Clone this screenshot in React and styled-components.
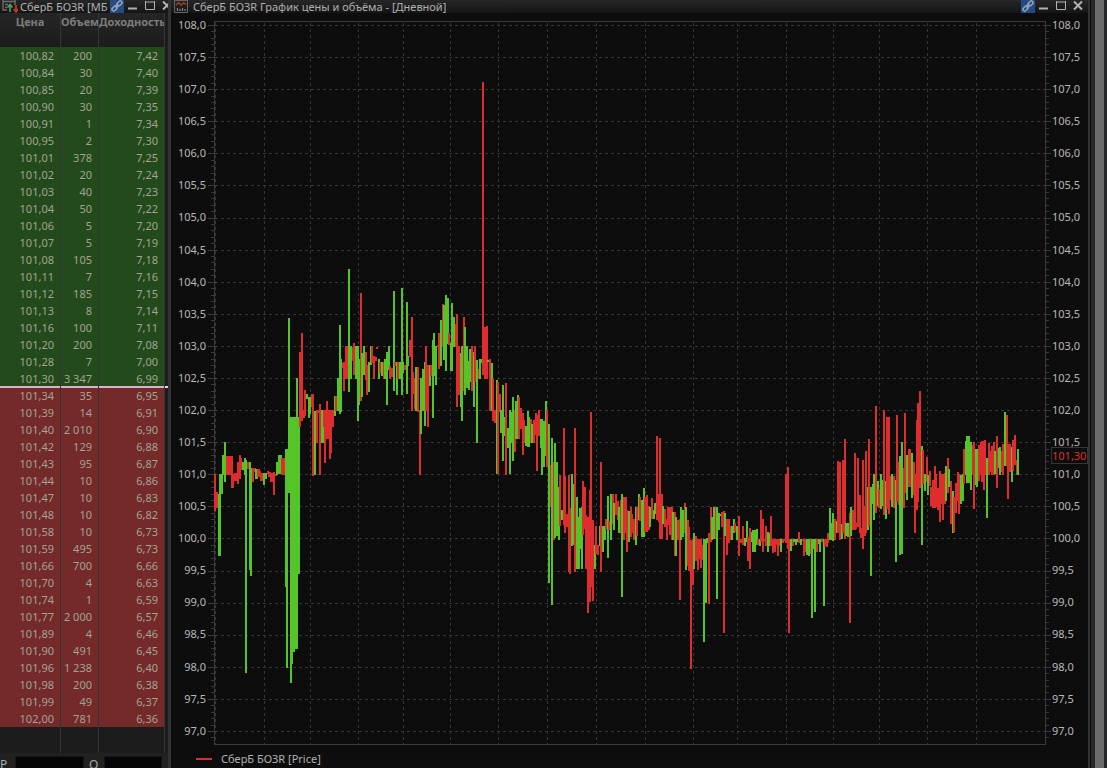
import React from 'react'
import styled, { createGlobalStyle } from "styled-components";

const asks = [
  ['100,82', '200', '7,42'], ['100,84', '30', '7,40'], ['100,85', '20', '7,39'], ['100,90', '30', '7,35'],
  ['100,91', '1', '7,34'], ['100,95', '2', '7,30'], ['101,01', '378', '7,25'], ['101,02', '20', '7,24'],
  ['101,03', '40', '7,23'], ['101,04', '50', '7,22'], ['101,06', '5', '7,20'], ['101,07', '5', '7,19'],
  ['101,08', '105', '7,18'], ['101,11', '7', '7,16'], ['101,12', '185', '7,15'], ['101,13', '8', '7,14'],
  ['101,16', '100', '7,11'], ['101,20', '200', '7,08'], ['101,28', '7', '7,00'], ['101,30', '3 347', '6,99'],
]

const bids = [
  ['101,34', '35', '6,95'], ['101,39', '14', '6,91'], ['101,40', '2 010', '6,90'], ['101,42', '129', '6,88'],
  ['101,43', '95', '6,87'], ['101,44', '10', '6,86'], ['101,47', '10', '6,83'], ['101,48', '10', '6,82'],
  ['101,58', '10', '6,73'], ['101,59', '495', '6,73'], ['101,66', '700', '6,66'], ['101,70', '4', '6,63'],
  ['101,74', '1', '6,59'], ['101,77', '2 000', '6,57'], ['101,89', '4', '6,46'], ['101,90', '491', '6,45'],
  ['101,96', '1 238', '6,40'], ['101,98', '200', '6,38'], ['101,99', '49', '6,37'], ['102,00', '781', '6,36'],
]

// colour, x, top, bottom and, when wider than 2, the width
const bars = `
r 214 474 511,r 216 492 508,g 218 494 556 3,g 219 474 494 4,g 222 455 475 4,g 224 442 482,r 226 456 475 7,r 231 474 488 3,
r 234 473 481 4,r 237 462 484,r 239 455 479,r 240 458 470,g 242 462 470 3,g 244 458 475,g 245 460 673,r 247 462 469 3,
g 249 462 570,g 250 468 576,r 252 468 482,r 254 468 472,g 255 469 479 3,r 257 469 477 3,r 258 471 477 3,r 260 473 481 3,
g 263 473 485,g 265 473 479,r 267 471 474,r 268 472 477 3,r 270 473 482 4,r 273 472 495,r 275 474 476,g 276 462 475,
g 278 455 474 4,r 281 458 475 4,g 285 449 587,g 286 449 668,g 288 318 493,g 288 417 493 12,g 290 417 683,g 291 417 664,
g 293 417 652,g 294 417 649 4,g 298 417 574,g 296 378 420,r 299 352 427,r 301 333 421,r 303 410 418,r 304 390 416,
g 306 394 399,g 308 397 418,g 309 397 414,r 311 394 407 3,r 312 394 476,g 314 411 475,r 316 410 443,r 318 410 413,
r 319 404 475,g 321 410 443 3,r 323 410 427,r 324 410 463,r 326 401 439,r 328 410 439,r 329 410 459,r 330 410 453,
r 332 410 427,g 334 396 416,r 335 396 411,g 337 378 411,g 339 325 414,g 340 359 412,r 342 363 368 3,r 343 362 391,
r 345 346 379 3,g 348 269 392,g 350 346 379,r 352 347 361,r 353 343 375,g 355 346 379 3,g 357 346 421,g 358 359 405,
r 360 293 401,g 361 353 397,g 363 346 375,r 365 352 380,r 366 365 395,g 368 362 392,g 370 346 365,r 371 346 363,
r 373 356 379,r 375 357 361,r 376 347 349,g 378 359 379,r 379 362 373,g 381 362 376,r 383 362 379,g 384 359 379,
g 386 352 405,g 388 346 370,r 389 366 379,r 391 368 377,g 393 291 391,r 394 362 366,g 396 362 395,r 397 362 379 3,
g 399 362 379,g 401 288 395,g 402 362 373,r 404 365 370,g 406 302 394,g 407 356 366,r 409 340 357,r 411 317 411,
r 412 372 394,r 414 378 409,g 415 367 411,r 417 367 412,r 419 410 475,g 420 378 434,g 422 369 411,g 424 362 426,
r 425 346 411,r 427 365 427,g 429 365 386,r 430 365 376,g 432 340 418,g 433 333 376,g 435 346 385,r 437 345 347,
r 438 333 369,g 440 320 366,r 442 304 347,g 443 305 360,g 445 295 371,g 447 298 344,r 448 333 345,g 450 343 371,
g 451 303 371,g 453 317 347,r 455 324 347,r 456 314 407,r 458 346 395,g 460 353 407,g 461 346 421,r 463 317 391,
g 464 327 395,g 466 346 388,g 468 361 390,g 469 349 382,r 471 346 391,g 473 352 407,r 474 346 382,g 476 360 443,
r 478 369 379,g 479 359 379,g 481 359 363,r 482 82 375,r 484 327 379,r 486 326 379,g 487 360 362,r 489 359 411,
g 491 363 411,r 492 379 421,r 494 410 423,g 496 380 474,r 497 382 474,r 499 394 412,g 500 410 433,g 502 385 461,
g 504 417 436,r 505 383 475,g 507 428 448,g 509 410 474,g 511 412 443,g 512 397 461,r 514 410 452,g 515 401 439,
g 517 395 439,r 518 397 439,r 520 408 429,r 522 413 455,r 523 420 443,g 525 426 446,g 527 411 447,g 528 417 447,
r 530 419 443,g 531 424 443,r 533 420 443,r 535 413 435,r 536 415 471,r 538 410 436,g 540 419 448,g 541 419 475,
g 543 421 467,g 545 401 456,r 546 410 467,g 548 424 583,r 550 465 507,g 551 438 605,r 553 462 540,g 554 443 538,
g 556 462 536,g 558 487 540,r 559 475 526,g 561 510 520,r 563 428 525,r 564 476 533,r 566 514 527,r 568 475 572,
r 569 508 574,g 571 474 546,g 573 484 545,r 574 428 572,g 576 497 569,g 578 517 569,g 579 508 549,g 581 507 569,
r 582 481 535,r 584 487 529,r 585 515 569,r 587 517 613,r 589 490 602,r 590 412 587,r 592 520 601,g 594 545 569,
r 595 526 554,r 597 545 555,g 599 526 546,r 600 462 572,g 602 526 552,g 604 526 540,r 605 519 529,g 607 496 558,
r 608 521 530,g 610 494 540,r 612 494 524,g 613 503 530,r 615 494 515,r 617 501 520,g 618 507 533,r 620 500 533,
g 621 494 597,r 623 497 540,r 625 497 533,r 626 510 552,g 628 511 542,r 630 507 537,r 631 514 533,r 633 519 540,
g 635 507 545,r 636 507 536,g 638 494 520,r 639 497 521,g 641 500 537,g 643 488 537,r 644 497 532,r 646 495 532,
r 648 506 530,g 649 507 527,r 651 498 519,g 653 510 519,g 654 503 514,r 656 436 520,r 658 494 522,r 659 438 539,
r 661 494 539,g 662 506 524,r 664 509 527,r 666 519 540,r 667 507 525,r 669 507 535,r 671 507 540,g 672 512 540,
r 674 512 556,g 675 517 556,r 677 520 540,r 679 519 600,g 680 507 540,g 682 510 537,r 684 503 533,g 685 507 570,
r 687 520 566,r 688 527 571,r 690 540 669,r 692 539 585,g 693 533 569,r 695 536 561,r 697 539 570,r 699 539 559,
r 700 539 568,r 702 545 560,g 703 539 642,g 705 539 603,g 706 538 543,r 708 533 604,r 710 507 542,g 711 517 540,
g 713 507 539,r 715 507 539,g 716 507 599,g 718 513 530,g 719 514 516,r 721 512 527,r 723 511 633,g 724 513 536,
r 726 519 555,r 728 519 543,r 729 526 540,g 731 526 540,g 733 519 533,r 734 523 532,g 736 526 540,r 738 516 556,
r 740 539 543,r 742 526 545,g 744 538 546,g 746 521 542,r 747 537 561,r 749 528 569,g 751 532 542,g 752 530 552 4,
g 756 529 545,r 757 539 545,g 759 539 546,r 760 510 542,r 762 519 552,r 764 539 541,r 765 526 546,g 767 532 552,
g 768 533 546,r 770 516 546,r 772 539 553,r 774 539 552,r 776 539 545,r 777 539 556,r 779 539 546,g 780 539 552,
r 782 539 543,r 784 539 541,r 785 474 543,r 787 467 549,r 788 539 633,g 790 539 551,r 792 539 546,g 793 539 542,
g 795 539 545,g 796 539 542,r 798 532 543,g 800 539 545,r 802 539 541,r 803 539 556,r 805 539 552,g 806 539 555,
g 808 539 556,r 810 539 554,g 811 539 618,g 813 539 549,g 814 539 612,r 816 539 552,g 818 539 544,g 819 539 552,
r 821 539 542,g 823 539 606,r 824 539 546,r 826 539 547,r 827 533 543,g 829 508 540,g 831 523 540,g 832 513 541,
r 834 519 540,g 836 521 533,r 837 461 533,r 839 462 540,g 841 524 539,r 842 460 533,r 844 439 539,g 845 523 536,
g 847 523 537,r 849 513 623,g 850 507 536,r 852 510 530,r 854 453 530,r 855 523 529,r 857 458 527,r 859 495 533,
r 860 528 538,r 862 460 549,r 864 506 536,r 865 451 533,g 867 487 530,r 868 439 526,g 870 487 576,g 872 484 504,
g 873 474 520,r 875 406 513,g 877 481 506,r 878 489 508,g 880 474 509,g 882 480 506,r 883 410 515,g 885 481 519,
r 886 417 509 4,r 888 417 514,r 890 476 500,g 891 474 507,r 893 476 508,g 895 480 562,r 896 415 502,r 898 462 505,
g 899 456 555,g 901 442 554,r 903 468 508,r 904 413 493,g 906 455 500,r 908 449 487 3,g 911 453 498,r 913 462 495,
r 914 474 533,r 916 420 510,r 917 403 502,r 919 391 488,g 921 446 545,r 922 450 484,g 924 474 491,r 926 457 482,
g 927 475 495,r 929 471 486,r 930 487 506 4,r 932 480 508,r 934 466 508,r 935 474 507,r 937 488 510,r 939 471 522,
r 941 474 504,r 942 474 520,r 944 473 504,g 945 466 501,r 947 458 493,g 948 469 487,r 950 481 524,g 952 491 533,
r 953 497 532,r 955 483 513,r 957 472 501,r 958 474 514,g 960 475 504,g 962 474 501,r 963 449 484,g 965 441 475,
g 966 436 483 4,g 970 442 490,r 972 445 475,r 973 442 509,g 975 449 485,g 976 449 487,r 978 445 481,r 980 442 475,
r 981 441 482,r 983 441 490,r 984 440 475,g 986 458 518,r 988 443 475,r 990 451 472,r 991 446 475,r 993 442 475,
g 994 451 474,r 996 436 488,g 998 448 468,g 999 447 475,r 1001 451 472,r 1002 444 475,g 1004 412 466,r 1006 415 466,
r 1007 444 499,r 1009 444 472,g 1011 447 482,r 1012 440 471,r 1014 435 465,r 1016 460 475,g 1017 449 475
`.trim().split(',').map((bar) => bar.trim().split(' '))

const months = [215, 264, 310, 358, 403, 450, 498, 547, 596, 645, 693, 737, 786, 833, 879, 927, 976]
const levels = Array.from({ length: 23 }, (_, i) => (108 - i / 2).toFixed(1).replace('.', ','))
const levelY = (i) => Math.round(25 + i * 32.09)

function LinkIcon() {
  return (
    <svg width="12" height="12" viewBox="0 0 12 12" fill="none" stroke="#9cabc0" strokeWidth="1.4">
      <rect x="-2.8" y="-1.7" width="5.6" height="3.4" rx="1.5" transform="translate(3.5 8.5) rotate(-45)" />
      <rect x="-2.8" y="-1.7" width="5.6" height="3.4" rx="1.5" transform="translate(8.5 3.5) rotate(-45)" />
      <path d="M4.5 7.5l3-3" />
    </svg>
  )
}

function BookIcon() {
  return (
    <svg width="16" height="13" viewBox="0 0 16 13" fill="none">
      <path d="M1 0V10H5M1 1.5H13M13 0V5M3 4.5H6M3 7.5H5" stroke="#6c6c6c" strokeWidth="1.4" />
      <path d="M8 12V5M5.5 7.5L8 4.5L10.5 7.5" stroke="#4e9b60" strokeWidth="1.7" />
      <path d="M14 5V11M11.8 9L14 12L16 9" stroke="#c23a24" strokeWidth="1.7" />
    </svg>
  )
}

function ChartIcon() {
  return (
    <svg width="14" height="13" viewBox="0 0 14 13" fill="none">
      <path d="M.5 0V12.5H13.5V0M.5 .5H13.5" stroke="#666" />
      <path d="M2 5L4.5 2.8L7 5L9.5 2.8L12 4.5" stroke="#a93d25" strokeWidth="1.4" />
      <path d="M3.5 11V8M6 11V9M8.5 11V8M11 11V9" stroke="#777" strokeWidth="1.4" />
    </svg>
  )
}

function WindowButtons() {
  return (
    <Buttons>
      <LinkButton aria-label="Связать окна"><LinkIcon /></LinkButton>
      <WindowButton aria-label="Свернуть">
        <svg width="10" height="12" viewBox="0 0 10 12"><path d="M0 8.5H9" stroke="#b2b2b2" strokeWidth="2" /></svg>
      </WindowButton>
      <WindowButton aria-label="Развернуть">
        <svg width="10" height="12" viewBox="0 0 10 12"><path d="M.5 2H9.5M.5 1V9.5H9.5V1" fill="none" stroke="#b2b2b2" /></svg>
      </WindowButton>
      <WindowButton aria-label="Закрыть">
        <svg width="10" height="12" viewBox="0 0 10 12"><path d="M1 1.5L9 9.5M9 1.5L1 9.5" stroke="#b2b2b2" strokeWidth="2" /></svg>
      </WindowButton>
    </Buttons>
  )
}

function BookRow({ row, edge }) {
  return (
    <tr>
      <Cell $edge={edge}>{row[0]}</Cell>
      <Cell $edge={edge}>{row[1]}</Cell>
      <Cell $edge={edge}>{row[2]}</Cell>
    </tr>
  )
}

function OrderBook() {
  return (
    <BookPanel>
      <TitleBar>
        <BookIcon />
        <Title>СберБ БОЗR [МБ</Title>
        <WindowButtons />
      </TitleBar>
      <Table>
        <colgroup><PriceCol /><VolumeCol /><YieldCol /></colgroup>
        <thead>
          <tr><Head>Цена</Head><Head>Объем</Head><Head $start>Доходность</Head></tr>
        </thead>
        <Side $bg="#224a1a">
          {asks.map((row, i) => <BookRow key={row[0]} row={row} edge={i === asks.length - 1 ? 'bottom' : ''} />)}
        </Side>
        <Side $bg="#732a29">
          {bids.map((row, i) => <BookRow key={row[0]} row={row} edge={i === 0 ? 'top' : ''} />)}
        </Side>
        <tfoot>
          <tr><FootCell /><FootCell /><FootCell /></tr>
        </tfoot>
      </Table>
      <OrderForm>
        <label htmlFor="price">P</label>
        <Field id="price" $grow={70} />
        <label htmlFor="quantity">Q</label>
        <Field id="quantity" $grow={58} />
      </OrderForm>
    </BookPanel>
  )
}

function Plot() {
  return (
    <svg viewBox="208 21 843 724" preserveAspectRatio="none" shapeRendering="crispEdges">
      <g stroke="#353535" strokeDasharray="3 3">
        {levels.map((level, i) => <path key={level} d={`M215 ${levelY(i) + 0.5}H1045`} />)}
        {months.map((x) => <path key={x} d={`M${x + 0.5} 23V744`} />)}
      </g>
      <g stroke="#3a3a3a">
        {levels.map((level, i) => <path key={level} d={`M208 ${levelY(i) + 0.5}H214M1046 ${levelY(i) + 0.5}H1051`} />)}
        {Array.from({ length: 112 }, (_, i) => Math.round(25 + i * 6.418) + 0.5).map((y) => (
          <path key={y} d={`M211 ${y}H214M1046 ${y}H1049`} />
        ))}
        <rect x="214.5" y="21.5" width="831" height="723" fill="none" />
      </g>
      {bars.map(([color, x, top, bottom, width = 2], i) => (
        <rect key={i} x={x} y={top} width={width} height={bottom - top} fill={color === 'g' ? '#55c428' : '#df2c2c'} />
      ))}
    </svg>
  )
}

function PriceChart() {
  return (
    <ChartPanel>
      <TitleBar $chart>
        <ChartIcon />
        <Title>СберБ БОЗR График цены и объёма - [Дневной]</Title>
        <WindowButtons />
      </TitleBar>
      <ChartBody>
        <Axis $left>{levels.map((level) => <span key={level}>{level}</span>)}</Axis>
        <PlotArea><Plot /></PlotArea>
        <Axis>
          {levels.map((level) => <span key={level}>{level}</span>)}
          <LastPrice>101,30</LastPrice>
        </Axis>
      </ChartBody>
      <Legend><LegendMark />СберБ БОЗR [Price]</Legend>
    </ChartPanel>
  )
}

function App() {
  return (
    <>
      <GlobalStyle />
      <Screen>
        <OrderBook />
        <PriceChart />
        <ScrollTrack><ScrollThumb /></ScrollTrack>
      </Screen>
    </>
  )
}

export default App

const GlobalStyle = createGlobalStyle`
  * { box-sizing: border-box; }
  body {
    margin: 0;
    background: #0d0d0d;
    color: #aaa;
    font-family: "Noto Sans", "Open Sans", sans-serif;
    font-size: 11px;
    line-height: 16px;
  }
`
const Screen = styled.main`
  display: flex;
  height: 100vh;
  overflow: hidden;
`
const BookPanel = styled.section`
  display: flex;
  flex-direction: column;
  flex: 0 0 168px;
  overflow: hidden;
  background: #1c1c1c;
`
const ChartPanel = styled.section`
  display: flex;
  flex-direction: column;
  flex: 1;
  min-width: 0;
  border: solid #333;
  border-width: 0 2px 0 3px;
  background: #0d0d0d;
`
const TitleBar = styled.header`
  display: flex;
  align-items: center;
  flex: none;
  gap: ${props => props.$chart ? '5px' : '2px'};
  height: 13px;
  padding-left: ${props => props.$chart ? '3px' : '2px'};
  padding-right: ${props => props.$chart ? '5px' : '0'};
  overflow: hidden;
  background: linear-gradient(#262626, #151515);

  > svg {
    flex: none;
  }
`
const Title = styled.h1`
  flex: 1;
  min-width: 0;
  margin: 0;
  white-space: nowrap;
  font-size: 11px;
  line-height: 12px;
  font-weight: 400;
  color: #b0b0b0;
`
const Buttons = styled.div`
  display: flex;
  flex: none;
  gap: 7px;
  margin-right: -4px;

  ${ChartPanel} & {
    margin-right: 0;
  }
`
const WindowButton = styled.button`
  display: flex;
  width: 10px;
  height: 13px;
  padding: 0;
  border: none;
  background: transparent;
`
const LinkButton = styled(WindowButton)`
  justify-content: center;
  width: 14px;
  margin-right: -3px;
  background: #284a82;
`
const Table = styled.table`
  flex: none;
  width: 165px;
  table-layout: fixed;
  border-collapse: separate;
  border-spacing: 0;
`
const PriceCol = styled.col`
  width: 61px;
`
const VolumeCol = styled.col`
  width: 38px;
`
const YieldCol = styled.col`
  width: 66px;
`
const Head = styled.th`
  height: 34px;
  padding: 1px 0 0;
  overflow: hidden;
  border-right: 1px solid #353535;
  background: linear-gradient(#252525, #1c1c1c);
  color: #7c7c7c;
  font-size: 11px;
  text-align: ${props => props.$start ? 'left' : 'center'};
  vertical-align: top;
  white-space: nowrap;
`
const Side = styled.tbody`
  background: ${props => props.$bg};
`
// the spread line is one pixel of the last ask and one of the first bid
const edges = { bottom: 'inset 0 -1px #d9afd2', top: 'inset 0 1px #d9afd2' }

const Cell = styled.td`
  position: relative;
  height: 17px;
  padding: 0 6px 0 0;
  border-right: 1px solid #333;
  color: #a3a396;
  line-height: 17px;
  text-align: right;
  white-space: nowrap;
  box-shadow: ${props => edges[props.$edge] || 'none'};

  &:last-child::after {
    content: ${props => props.$edge === 'top' ? '""' : 'none'};
    position: absolute;
    right: -4px;
    top: -1px;
    width: 3px;
    height: 2px;
    background: #ddd;
  }
`
const FootCell = styled.td`
  height: 26px;
  padding: 0;
  border-right: 1px solid #333;
`
const OrderForm = styled.form`
  display: flex;
  flex: 1;
  gap: 5px;
  min-height: 0;
  padding: 3px 6px 0 0;
  overflow: hidden;
  background: #202222;

  label {
    flex: 0 0 10px;
    font-size: 12px;
    line-height: 18px;
  }
`
const Field = styled.input`
  flex: ${props => props.$grow} 1 0;
  min-width: 0;
  height: 20px;
  border: 1px solid #151515;
  background: #050505;
  color: #aaa;
`
const ChartBody = styled.div`
  display: flex;
  flex: 1;
  min-height: 0;
`
const Axis = styled.div`
  position: relative;
  display: flex;
  flex-direction: column;
  justify-content: space-between;
  flex: 0 0 37px;
  padding: ${props => props.$left ? '4px 2px 6px 0' : '4px 0 6px 1px'};
  text-align: ${props => props.$left ? 'right' : 'left'};
  color: #b8b8b8;
`
const LastPrice = styled.strong`
  position: absolute;
  top: 434px;
  left: 0;
  right: 0;
  border: 1px solid #353535;
  background: #0d0d0d;
  color: #df2c2c;
  font-weight: 400;
  line-height: 15px;
`
const PlotArea = styled.div`
  flex: 1;
  min-width: 0;
  padding-top: 8px;

  svg {
    display: block;
    width: 100%;
    height: 100%;
  }
`
const Legend = styled.footer`
  display: flex;
  align-items: center;
  flex: 0 0 23px;
  gap: 9px;
  padding: 4px 0 0 25px;
  color: #b0b0b0;
`
const LegendMark = styled.i`
  width: 16px;
  height: 2px;
  background: #df2c2c;
`
const ScrollTrack = styled.aside`
  display: flex;
  flex: 0 0 17px;
  padding: 0 3px 0 4px;
  border-left: 1px solid #080808;
  background: #252828;
`
const ScrollThumb = styled.div`
  flex: 1;
  background: #6b6b6b;
`
